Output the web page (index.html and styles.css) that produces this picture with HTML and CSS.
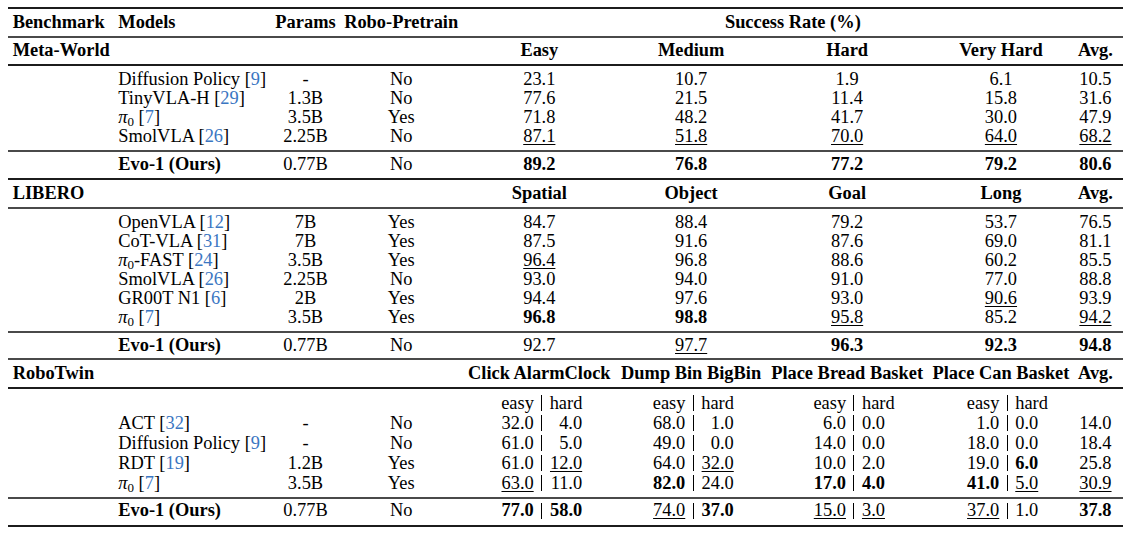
FILE: index.html
```html
<!DOCTYPE html>
<html>
<head>
<meta charset="utf-8">
<link rel="stylesheet" href="styles.css">
</head>
<body>
<div class="page">
<table class="tbl">
<colgroup>
<col class="c-bench"><col class="c-model"><col class="c-params"><col class="c-pre">
<col class="c-m1"><col class="c-m2"><col class="c-m3"><col class="c-m4"><col class="c-avg"><col class="c-tail">
</colgroup>
<tbody>
<tr class="r-hdr rule dark">
  <th class="l">Benchmark</th><th class="l">Models</th><th>Params</th><th>Robo-Pretrain</th><th colspan="6">Success Rate (%)</th>
</tr>
<tr class="r-mw rule">
  <th class="l">Meta-World</th><td></td><td></td><td></td><th>Easy</th><th>Medium</th><th>Hard</th><th>Very Hard</th><th>Avg.</th><td></td>
</tr>
<tr class="first rule dark">
  <td></td><td class="l">Diffusion Policy [<span class="cite">9</span>]</td><td>-</td><td>No</td><td>23.1</td><td>10.7</td><td>1.9</td><td>6.1</td><td>10.5</td><td></td>
</tr>
<tr>
  <td></td><td class="l">TinyVLA-H [<span class="cite">29</span>]</td><td>1.3B</td><td>No</td><td>77.6</td><td>21.5</td><td>11.4</td><td>15.8</td><td>31.6</td><td></td>
</tr>
<tr>
  <td></td><td class="l"><i class="pi">π</i><sub>0</sub> [<span class="cite">7</span>]</td><td>3.5B</td><td>Yes</td><td>71.8</td><td>48.2</td><td>41.7</td><td>30.0</td><td>47.9</td><td></td>
</tr>
<tr class="last">
  <td></td><td class="l">SmolVLA [<span class="cite">26</span>]</td><td>2.25B</td><td>No</td><td><u>87.1</u></td><td><u>51.8</u></td><td><u>70.0</u></td><td><u>64.0</u></td><td><u>68.2</u></td><td></td>
</tr>
<tr class="evo rule">
  <td></td><th class="l">Evo-1 (Ours)</th><td>0.77B</td><td>No</td><th>89.2</th><th>76.8</th><th>77.2</th><th>79.2</th><th>80.6</th><td></td>
</tr>

<tr class="r-lib rule dark">
  <th class="l">LIBERO</th><td></td><td></td><td></td><th>Spatial</th><th>Object</th><th>Goal</th><th>Long</th><th>Avg.</th><td></td>
</tr>
<tr class="first rule">
  <td></td><td class="l">OpenVLA [<span class="cite">12</span>]</td><td>7B</td><td>Yes</td><td>84.7</td><td>88.4</td><td>79.2</td><td>53.7</td><td>76.5</td><td></td>
</tr>
<tr>
  <td></td><td class="l">CoT-VLA [<span class="cite">31</span>]</td><td>7B</td><td>Yes</td><td>87.5</td><td>91.6</td><td>87.6</td><td>69.0</td><td>81.1</td><td></td>
</tr>
<tr>
  <td></td><td class="l"><i class="pi">π</i><sub>0</sub>-FAST [<span class="cite">24</span>]</td><td>3.5B</td><td>Yes</td><td><u>96.4</u></td><td>96.8</td><td>88.6</td><td>60.2</td><td>85.5</td><td></td>
</tr>
<tr>
  <td></td><td class="l">SmolVLA [<span class="cite">26</span>]</td><td>2.25B</td><td>No</td><td>93.0</td><td>94.0</td><td>91.0</td><td>77.0</td><td>88.8</td><td></td>
</tr>
<tr>
  <td></td><td class="l">GR00T N1 [<span class="cite">6</span>]</td><td>2B</td><td>Yes</td><td>94.4</td><td>97.6</td><td>93.0</td><td><u>90.6</u></td><td>93.9</td><td></td>
</tr>
<tr class="last">
  <td></td><td class="l"><i class="pi">π</i><sub>0</sub> [<span class="cite">7</span>]</td><td>3.5B</td><td>Yes</td><th>96.8</th><th>98.8</th><td><u>95.8</u></td><td>85.2</td><td><u>94.2</u></td><td></td>
</tr>
<tr class="evo evo-lib rule">
  <td></td><th class="l">Evo-1 (Ours)</th><td>0.77B</td><td>No</td><td>92.7</td><td><u>97.7</u></td><th>96.3</th><th>92.3</th><th>94.8</th><td></td>
</tr>

<tr class="r-rt rule">
  <th class="l">RoboTwin</th><td></td><td></td><td></td><th>Click AlarmClock</th><th>Dump Bin BigBin</th><th>Place Bread Basket</th><th>Place Can Basket</th><th>Avg.</th><td></td>
</tr>
<tr class="rt first rule dark">
  <td></td><td></td><td></td><td></td>
  <td class="pr p1"><div class="pair"><span class="e">easy</span><span class="bar"></span><span class="h">hard</span></div></td>
  <td class="pr p2"><div class="pair"><span class="e">easy</span><span class="bar"></span><span class="h">hard</span></div></td>
  <td class="pr p3"><div class="pair lh"><span class="e">easy</span><span class="bar"></span><span class="h">hard</span></div></td>
  <td class="pr p4"><div class="pair lh"><span class="e">easy</span><span class="bar"></span><span class="h">hard</span></div></td>
  <td></td><td></td>
</tr>
<tr class="rt">
  <td></td><td class="l">ACT [<span class="cite">32</span>]</td><td>-</td><td>No</td>
  <td class="pr p1"><div class="pair"><span class="e">32.0</span><span class="bar"></span><span class="h">4.0</span></div></td>
  <td class="pr p2"><div class="pair"><span class="e">68.0</span><span class="bar"></span><span class="h">1.0</span></div></td>
  <td class="pr p3"><div class="pair lh"><span class="e">6.0</span><span class="bar"></span><span class="h">0.0</span></div></td>
  <td class="pr p4"><div class="pair lh"><span class="e">1.0</span><span class="bar"></span><span class="h">0.0</span></div></td>
  <td>14.0</td><td></td>
</tr>
<tr class="rt">
  <td></td><td class="l">Diffusion Policy [<span class="cite">9</span>]</td><td>-</td><td>No</td>
  <td class="pr p1"><div class="pair"><span class="e">61.0</span><span class="bar"></span><span class="h">5.0</span></div></td>
  <td class="pr p2"><div class="pair"><span class="e">49.0</span><span class="bar"></span><span class="h">0.0</span></div></td>
  <td class="pr p3"><div class="pair lh"><span class="e">14.0</span><span class="bar"></span><span class="h">0.0</span></div></td>
  <td class="pr p4"><div class="pair lh"><span class="e">18.0</span><span class="bar"></span><span class="h">0.0</span></div></td>
  <td>18.4</td><td></td>
</tr>
<tr class="rt">
  <td></td><td class="l">RDT [<span class="cite">19</span>]</td><td>1.2B</td><td>Yes</td>
  <td class="pr p1"><div class="pair"><span class="e">61.0</span><span class="bar"></span><span class="h"><u>12.0</u></span></div></td>
  <td class="pr p2"><div class="pair"><span class="e">64.0</span><span class="bar"></span><span class="h"><u>32.0</u></span></div></td>
  <td class="pr p3"><div class="pair lh"><span class="e">10.0</span><span class="bar"></span><span class="h">2.0</span></div></td>
  <td class="pr p4"><div class="pair lh"><span class="e">19.0</span><span class="bar"></span><span class="h"><b>6.0</b></span></div></td>
  <td>25.8</td><td></td>
</tr>
<tr class="rt last">
  <td></td><td class="l"><i class="pi">π</i><sub>0</sub> [<span class="cite">7</span>]</td><td>3.5B</td><td>Yes</td>
  <td class="pr p1"><div class="pair"><span class="e"><u>63.0</u></span><span class="bar"></span><span class="h">11.0</span></div></td>
  <td class="pr p2"><div class="pair"><span class="e"><b>82.0</b></span><span class="bar"></span><span class="h">24.0</span></div></td>
  <td class="pr p3"><div class="pair lh"><span class="e"><b>17.0</b></span><span class="bar"></span><span class="h"><b>4.0</b></span></div></td>
  <td class="pr p4"><div class="pair lh"><span class="e"><b>41.0</b></span><span class="bar"></span><span class="h"><u>5.0</u></span></div></td>
  <td><u>30.9</u></td><td></td>
</tr>
<tr class="evo evo-rt rule end">
  <td></td><th class="l">Evo-1 (Ours)</th><td>0.77B</td><td>No</td>
  <td class="pr p1"><div class="pair"><span class="e"><b>77.0</b></span><span class="bar"></span><span class="h"><b>58.0</b></span></div></td>
  <td class="pr p2"><div class="pair"><span class="e"><u>74.0</u></span><span class="bar"></span><span class="h"><b>37.0</b></span></div></td>
  <td class="pr p3"><div class="pair lh"><span class="e"><u>15.0</u></span><span class="bar"></span><span class="h"><u>3.0</u></span></div></td>
  <td class="pr p4"><div class="pair lh"><span class="e"><u>37.0</u></span><span class="bar"></span><span class="h">1.0</span></div></td>
  <th>37.8</th><td></td>
</tr>
</tbody>
</table>
</div>
</body>
</html>
```
FILE: styles.css
```css
html, body {
  margin: 0;
  background: #ffffff;
}
body {
  font-family: "Liberation Serif", "Times New Roman", serif;
  color: #000;
}
.page {
  padding: 7px 0 0 8px;
}
.tbl {
  width: 1115px;
  table-layout: fixed;
  border-collapse: separate;
  border-spacing: 0;
  font-size: 18.4px;
  line-height: 19px;
}
.tbl td, .tbl th {
  padding: 0;
  text-align: center;
  white-space: nowrap;
  vertical-align: top;
  font-weight: normal;
}
.tbl th { font-weight: bold; }
.tbl .l {
  text-align: left;
  padding-left: 4.7px;
}
.c-bench { width: 105.6px; }
.c-model { width: 157.7px; }
.c-params { width: 68.4px; }
.c-pre { width: 123px; }
.c-m1 { width: 153.3px; }
.c-m2 { width: 150.3px; }
.c-m3 { width: 161.7px; }
.c-m4 { width: 146px; }
.c-avg { width: 43px; }
.c-tail { width: 6px; }

/* rules */
.tbl .rule > td, .tbl .rule > th { border-top: 2px solid #4a4a4a; }
.tbl .rule.dark > td, .tbl .rule.dark > th { border-top-color: #1c1c1c; }
.tbl .end > td, .tbl .end > th { border-bottom: 2px solid #1c1c1c; }

/* row spacing */
.tbl tr.r-hdr > * { padding-top: 4px; padding-bottom: 4px; }
.tbl tr.r-mw > * { padding-top: 3px; padding-bottom: 4px; }
.tbl tr.r-lib > * { padding-top: 4px; padding-bottom: 4px; }
.tbl tr.r-rt > * { padding-top: 4px; padding-bottom: 4px; }
.tbl tr.first > * { padding-top: 4px; }
.tbl tr.last > * { padding-bottom: 4px; }
.tbl tr.evo > * { padding-top: 3px; padding-bottom: 4px; }
.tbl tr.evo-lib > * { padding-top: 3px; padding-bottom: 3px; }
.tbl tr.evo-rt > * { padding-top: 2px; padding-bottom: 5px; }
.tbl tr.rt > * { line-height: 20px; }

/* text details */
.cite { color: #3a76c2; }
.pi { font-style: italic; }
sub {
  font-size: 13px;
  line-height: 0;
  vertical-align: -3px;
}
u {
  text-decoration: underline;
  text-decoration-thickness: 1px;
  text-underline-offset: 2px;
}

/* easy | hard pairs */
.tbl .pr { text-align: left; }
.tbl .p1 { padding-left: 38.5px; }
.tbl .p2 { padding-left: 36.8px; }
.tbl .p3 { padding-left: 47.2px; }
.tbl .p4 { padding-left: 38.8px; }
.pair {
  display: grid;
  grid-template-columns: 32.5px 1px 32.5px;
  column-gap: 7.5px;
  width: max-content;
}
.pair .e { text-align: right; }
.pair .h { text-align: right; }
.pair.lh .h { text-align: left; }
.bar {
  width: 1px;
  height: 16px;
  margin-top: 2px;
  background: #000;
}
```
